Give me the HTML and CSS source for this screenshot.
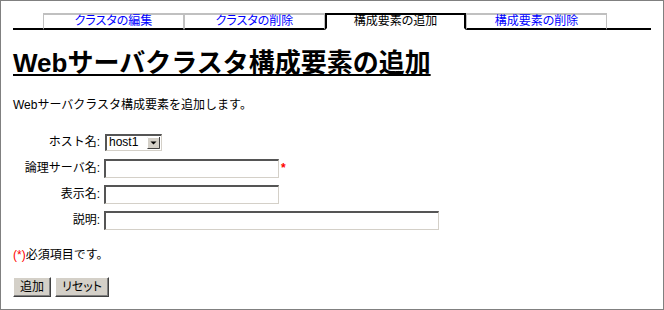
FILE: index.html
```html
<!DOCTYPE html>
<html lang="ja">
<head>
    <meta charset="UTF-8">
    <title>Webサーバクラスタ構成要素の追加</title>
    <link rel="stylesheet" href="styles.css">
</head>
<body>
    <div class="frame">
        <ul class="tabs">
            <li class="tab"><a href="#">クラスタの編集</a></li>
            <li class="tab"><a href="#">クラスタの削除</a></li>
            <li class="tab active">構成要素の追加</li>
            <li class="tab"><a href="#">構成要素の削除</a></li>
        </ul>

        <h1>Webサーバクラスタ構成要素の追加</h1>
        <p class="lead">Webサーバクラスタ構成要素を追加します。</p>

        <form id="memberForm">
            <div class="form-grid">
                <label for="host">ホスト名:</label>
                <div class="field">
                    <select id="host">
                        <option>host1</option>
                    </select>
                </div>

                <label for="serverName">論理サーバ名:</label>
                <div class="field">
                    <input type="text" id="serverName" class="short">
                    <span class="req-mark">*</span>
                </div>

                <label for="displayName">表示名:</label>
                <div class="field">
                    <input type="text" id="displayName" class="short">
                </div>

                <label for="description">説明:</label>
                <div class="field">
                    <input type="text" id="description" class="long">
                </div>
            </div>

            <p class="note"><span class="req">(*)</span>必須項目です。</p>

            <div class="buttons">
                <button type="submit">追加</button>
                <button type="reset">リセット</button>
            </div>
        </form>
    </div>
</body>
</html>
```

FILE: styles.css
```css
* {
    margin: 0;
    padding: 0;
    box-sizing: border-box;
}

body {
    font-family: "Liberation Sans", "Noto Sans CJK JP", sans-serif;
    font-size: 12px;
    line-height: 16px;
    color: #000;
    background: #fff;
}

.frame {
    width: 664px;
    height: 310px;
    border: 1px solid #808080;
    padding: 12px 12px 0 12px;
}

/* タブ */
.tabs {
    display: flex;
    list-style: none;
    padding-left: 30px;
    height: 17px;
    border-bottom: 2px solid #000;
}

.tab {
    width: 141px;
    height: 17px;
    margin-bottom: -2px;
    border-top: 2px solid #c0c0c0;
    border-left: 1px solid #c0c0c0;
    border-right: 1px solid #c0c0c0;
    border-bottom: 2px solid #000;
    text-align: center;
    font-size: 12px;
    line-height: 13px;
    font-feature-settings: "palt";
}

.tab a {
    color: #00f;
    text-decoration: none;
}

.tab.active {
    border: 2px solid #000;
    border-bottom-color: #fff;
    background: #fff;
}

h1 {
    margin-top: 17px;
    font-size: 26px;
    line-height: 32px;
    font-weight: bold;
    text-decoration: underline;
}

.lead {
    margin-top: 18px;
}

/* フォーム */
.form-grid {
    display: grid;
    grid-template-columns: 87px auto;
    grid-auto-rows: 20px;
    column-gap: 4px;
    row-gap: 6px;
    align-items: center;
    margin-top: 19px;
}

.form-grid label {
    text-align: right;
}

.field {
    display: flex;
    align-items: center;
}

input {
    height: 19px;
    border-style: solid;
    border-width: 2px 1px 1px 2px;
    border-color: #555 #d4d0c8 #d4d0c8 #555;
    background: #fff;
    font-family: inherit;
    font-size: 12px;
    padding: 0 2px;
}

input.short {
    width: 175px;
}

input.long {
    width: 335px;
}

select {
    appearance: none;
    width: 57px;
    height: 17px;
    margin-left: 1px;
    border-style: solid;
    border-width: 2px 1px 1px 2px;
    border-color: #555 #d4d0c8 #d4d0c8 #555;
    background-color: #fff;
    background-image: url("data:image/svg+xml;charset=UTF-8,%3csvg xmlns='http://www.w3.org/2000/svg' width='13' height='12'%3e%3crect width='13' height='12' fill='%23d4d0c8'/%3e%3cpath d='M.5 11.5V.5h12' stroke='%23fff' fill='none'/%3e%3cpath d='M.5 11.5h12V0' stroke='%23404040' fill='none'/%3e%3cpath d='M3.5 4.5h6l-3 3z' fill='%23000'/%3e%3c/svg%3e");
    background-repeat: no-repeat;
    background-position: right 1px center;
    font-family: "Liberation Sans", sans-serif;
    font-size: 12px;
    line-height: 13px;
    padding-left: 2px;
    color: #000;
}

.req-mark {
    color: #f00;
    margin-left: 2px;
    font-weight: bold;
}

.note {
    margin-top: 17px;
}

.req {
    color: #f00;
}

.buttons {
    display: flex;
    gap: 4px;
    margin-top: 14px;
}

button {
    height: 20px;
    padding: 0 6px;
    background: #d4d0c8;
    border: 1px solid;
    border-color: #fff #404040 #404040 #fff;
    box-shadow: inset -1px -1px 0 #808080;
    font-family: inherit;
    font-size: 12px;
    line-height: 16px;
    color: #000;
    font-feature-settings: "palt";
}
```
